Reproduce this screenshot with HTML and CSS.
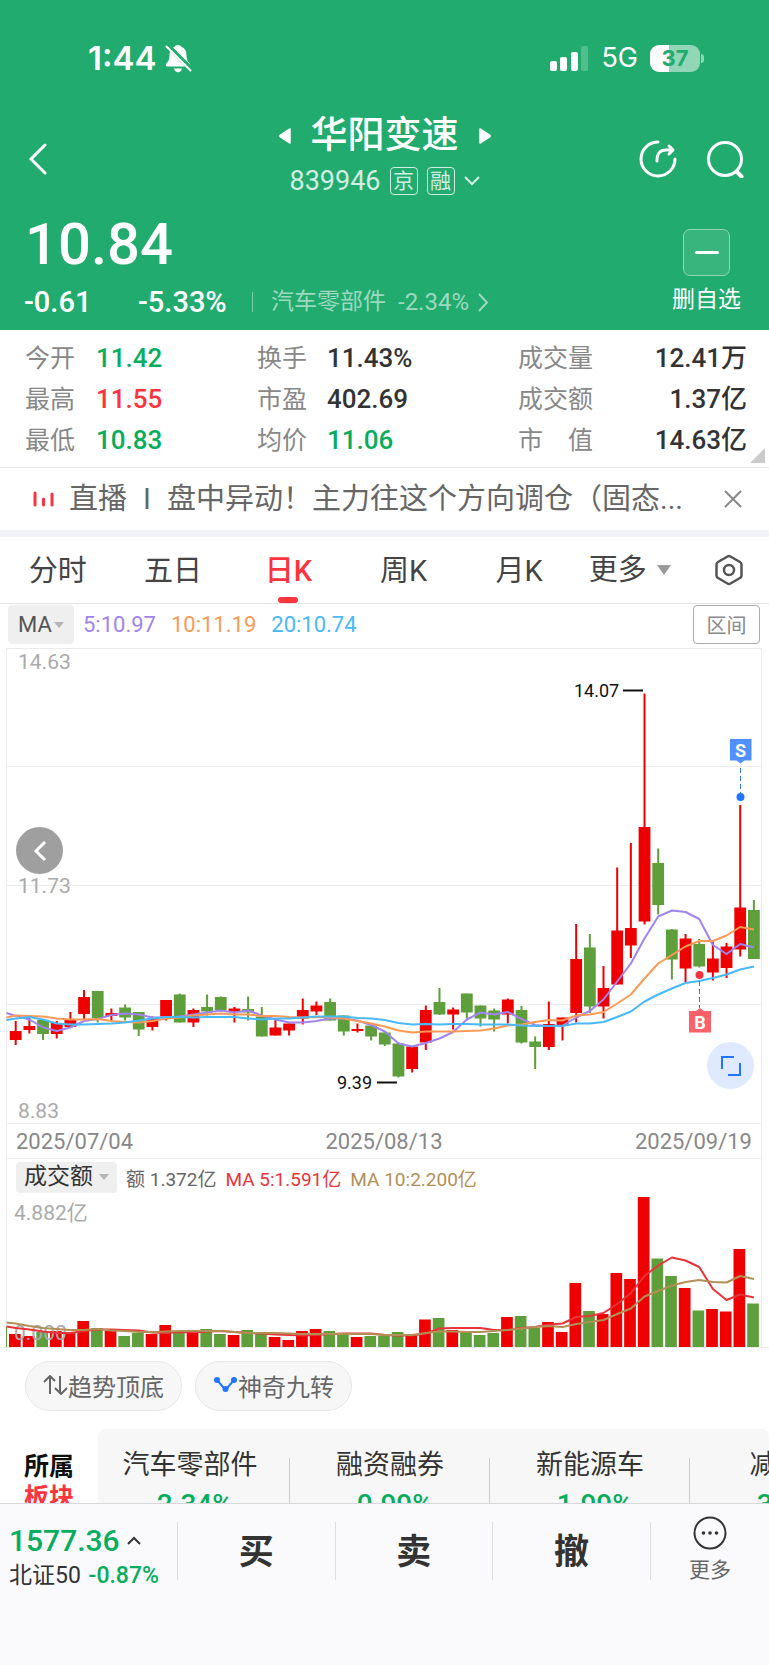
FILE: index.html
```html
<!DOCTYPE html>
<html lang="zh-CN">
<head>
    <meta charset="UTF-8">
    <meta name="viewport" content="width=device-width, initial-scale=1">
    <title>华阳变速 839946</title>
    <link rel="stylesheet" href="styles.css">
</head>
<body>
<div class="app">
    <div class="content">
        <header class="header">
            <div class="status">
                <span class="clock">1:44</span>
                <svg class="bell" width="27" height="29" viewBox="0 0 27 29">
                    <path d="M13 1c-1.800 0-3 .8-3.600 2C5.800 4.300 4.600 7.400 4.500 11c-.1 4.600-1.300 6.500-3.200 8.600C.4 21 .8 22.500 2.500 22.500h21c1.700 0 2.200-1.500 1.200-2.900-1.900-2.100-3.100-4-3.200-8.600-.1-3.600-1.300-6.700-4.900-8C16 1.800 14.800 1 13 1zM9 24.500c.5 2.300 2 3.700 4 3.700s3.500-1.400 4-3.700z" fill="#fff"/>
                    <path d="M2 1l25 25" stroke="#22ab6e" stroke-width="5"/>
                    <path d="M1.500 2.500L25.500 26.500" stroke="#fff" stroke-width="2" stroke-linecap="round"/>
                </svg>
                <svg class="signal" width="39" height="25" viewBox="0 0 39 25" fill="#fff">
                    <rect x="0" y="15" width="7" height="10" rx="2"/>
                    <rect x="10" y="11" width="7" height="14" rx="2"/>
                    <rect x="21" y="6" width="7" height="19" rx="2"/>
                    <rect x="31" y="0" width="7" height="25" rx="2" opacity=".22"/>
                </svg>
                <span class="network">5G</span>
                <span class="battery">37</span>
                <span class="battery-tip"></span>
            </div>
            <div class="nav">
                <button class="icon-btn back" aria-label="返回">
                    <svg width="20" height="32" viewBox="0 0 20 32"><path d="M17 2L3 16l14 14" fill="none" stroke="#fff" stroke-width="3" stroke-linecap="round"/></svg>
                </button>
                <div class="title">
                    <div class="name-row">
                        <svg width="12" height="18" viewBox="0 0 12 18"><path d="M11 2v14L1 9.500V8.500z" fill="#fff" stroke="#fff" stroke-width="1.500" stroke-linejoin="round"/></svg>
                        <h1>华阳变速</h1>
                        <svg width="12" height="18" viewBox="0 0 12 18"><path d="M1 2v14l10-6.500V8.500z" fill="#fff" stroke="#fff" stroke-width="1.500" stroke-linejoin="round"/></svg>
                    </div>
                    <div class="code-row">
                        <span>839946</span>
                        <span class="mark">京</span>
                        <span class="mark">融</span>
                        <svg width="16" height="10" viewBox="0 0 16 10"><path d="M1 1l7 7 7-7" fill="none" stroke="#d3eee2" stroke-width="2"/></svg>
                    </div>
                </div>
                <div class="nav-right">
                    <button class="icon-btn" aria-label="分享">
                        <svg width="38" height="38" viewBox="0 0 38 38" fill="none" stroke="#fff" stroke-width="3" stroke-linecap="round" stroke-linejoin="round"><path d="M19 2A17 17 0 1 0 36 19"/><path d="M18 21c0-8 3-11 9-11h6M30 6l4 4-4 4"/></svg>
                    </button>
                    <button class="icon-btn" aria-label="搜索">
                        <svg width="38" height="38" viewBox="0 0 38 38" fill="none" stroke="#fff" stroke-width="3" stroke-linecap="round"><circle cx="19" cy="19" r="16.500"/><path d="M30.500 31.500l5 5" stroke-width="4"/></svg>
                    </button>
                </div>
            </div>
            <div class="quote">
                <div class="quote-main">
                    <div class="price">10.84</div>
                    <div class="change">
                        <span class="diff">-0.61</span>
                        <span class="percent">-5.33%</span>
                        <a class="sector" href="#">汽车零部件 <span>-2.34%</span>
                            <svg width="11" height="19" viewBox="0 0 11 19"><path d="M1 1l8 8.500L1 18" fill="none" stroke="#9cd9bf" stroke-width="2"/></svg>
                        </a>
                    </div>
                </div>
                <div class="fav">
                    <button class="fav-btn" id="fav" aria-label="删自选"></button>
                    <label for="fav">删自选</label>
                </div>
            </div>
        </header>

        <section class="stats">
            <span class="label">今开</span><span class="down">11.42</span>
            <span class="label">换手</span><span>11.43%</span>
            <span class="label">成交量</span><span class="right">12.41万</span>
            <span class="label">最高</span><span class="up">11.55</span>
            <span class="label">市盈</span><span>402.69</span>
            <span class="label">成交额</span><span class="right">1.37亿</span>
            <span class="label">最低</span><span class="down">10.83</span>
            <span class="label">均价</span><span class="down">11.06</span>
            <span class="label">市　值</span><span class="right">14.63亿</span>
        </section>

        <div class="news">
            <svg width="21" height="16" viewBox="0 0 21 16" stroke="#fb3440" stroke-width="3" stroke-linecap="round"><path d="M2 2v12M10.500 8v6M19 3v11"/></svg>
            <a href="#"><span>直播</span><span class="bar">I</span><span>盘中异动！主力往这个方向调仓（固态...</span></a>
            <button class="icon-btn" aria-label="关闭">
                <svg width="18" height="18" viewBox="0 0 18 18"><path d="M1 1l16 16M17 1L1 17" stroke="#888" stroke-width="2"/></svg>
            </button>
        </div>

        <nav class="tabs">
            <button class="tab">分时</button>
            <button class="tab">五日</button>
            <button class="tab active">日K</button>
            <button class="tab">周K</button>
            <button class="tab">月K</button>
            <button class="tab more">更多<i class="caret"></i></button>
            <button class="icon-btn setting" aria-label="设置">
                <svg width="30" height="32" viewBox="0 0 30 32" fill="none" stroke="#555" stroke-width="2.500" stroke-linejoin="round"><path d="M13.500 2.500a3 3 0 0 1 3 0l9.500 5.500a3 3 0 0 1 1.500 2.500v11a3 3 0 0 1-1.500 2.500l-9.500 5.500a3 3 0 0 1-3 0L4 24a3 3 0 0 1-1.500-2.500v-11A3 3 0 0 1 4 8z"/><circle cx="15" cy="16" r="5"/></svg>
            </button>
        </nav>

        <div class="ma-row">
            <button class="chip">MA<i class="caret small"></i></button>
            <span class="ma5">5:10.97</span>
            <span class="ma10">10:11.19</span>
            <span class="ma20">20:10.74</span>
            <button class="range">区间</button>
        </div>

        <div class="chart">
            <svg id="kline" viewBox="0 0 769 476">
                <path class="grid" d="M6.500 .5h755v475h-755zM6.500 118.500h755M6.500 237.500h755M6.500 356.500h755"/>
                <text class="axis" x="18" y="21">14.63</text>
                <text class="axis" x="18" y="245">11.73</text>
                <text class="axis" x="18" y="470">8.83</text>
                <g id="candles"></g>
                <g id="maLines"></g>
                <text class="peak" x="574" y="49">14.07</text>
                <path d="M623 42.500h20M377 434.500h20" stroke="#111" stroke-width="2"/>
                <text class="peak" x="337" y="441">9.39</text>
                <g>
                    <path d="M740.500 120v26" stroke="#2b78ff" stroke-dasharray="5 3"/>
                    <circle cx="740.500" cy="149" r="4" fill="#2275ff"/>
                    <path d="M730 91h21.500v21.500h-7l-4 3-4-3H730z" fill="#5191ff"/>
                    <text class="flag" x="740.500" y="109">S</text>
                    <path d="M699.500 333v27" stroke="#fb3440" stroke-dasharray="5 3"/>
                    <circle cx="699.500" cy="327" r="4" fill="#fb3440"/>
                    <path d="M689 363h7l4-3 4 3h7v21.500h-22z" fill="#fb616a"/>
                    <text class="flag" x="700" y="381">B</text>
                </g>
            </svg>
            <button class="round prev" aria-label="上一段">
                <svg width="14" height="22" viewBox="0 0 14 22"><path d="M12 2l-9 9 9 9" fill="none" stroke="#fff" stroke-width="3"/></svg>
            </button>
            <button class="round expand" aria-label="全屏">
                <svg width="22" height="22" viewBox="0 0 22 22"><path d="M14 2H2v12M20 8v12H8" fill="none" stroke="#2275ff" stroke-width="2"/></svg>
            </button>
        </div>
        <div class="dates"><span>2025/07/04</span><span>2025/08/13</span><span>2025/09/19</span></div>

        <div class="volume">
            <div class="vol-row">
                <button class="chip">成交额<i class="caret small"></i></button>
                <span>额 1.372亿</span>
                <span class="vol5">MA 5:1.591亿</span>
                <span class="vol10">MA 10:2.200亿</span>
            </div>
            <svg id="volChart" viewBox="0 0 769 154">
                <path class="grid" d="M6.500 0v153M761.500 0v153M0 153.500h769"/>
                <text class="axis" x="14" y="26">4.882亿</text>
                <g id="bars"></g>
                <text class="axis" x="14" y="146">0.000</text>
                <g id="volLines"></g>
            </svg>
        </div>

        <div class="tools">
            <button class="pill"><svg width="25" height="20" viewBox="0 0 25 20" fill="none" stroke="#666" stroke-width="2"><path d="M1 7l6-6 5 5M7 1v18M17 1v17M12 13l6 6 6-6"/></svg>趋势顶底</button>
            <button class="pill"><svg width="25" height="20" viewBox="0 0 25 20" fill="#2275ff"><path d="M4 5l8.500 10L21 5" fill="none" stroke="#2275ff" stroke-width="2"/><circle cx="4" cy="5" r="3"/><circle cx="12.500" cy="14" r="3"/><circle cx="21" cy="5" r="3"/></svg>神奇九转</button>
        </div>

        <div class="boards">
            <div class="boards-title">所属<br><em>板块</em></div>
            <div class="boards-list">
                <a class="board" href="#">汽车零部件<b>-2.34%</b></a>
                <a class="board" href="#">融资融券<b>-0.99%</b></a>
                <a class="board" href="#">新能源车<b>-1.99%</b></a>
                <a class="board" href="#">减速器<b>-3.01%</b></a>
            </div>
        </div>
    </div>

    <footer class="trade">
        <a class="index" href="#">
            <span class="point">1577.36 <svg width="14" height="9" viewBox="0 0 14 9"><path d="M1 8l6-6 6 6" fill="none" stroke="#333" stroke-width="2"/></svg></span>
            <span class="index-name">北证50 <span class="down">-0.87%</span></span>
        </a>
        <button class="action">买</button>
        <button class="action">卖</button>
        <button class="action">撤</button>
        <button class="other">
            <svg width="34" height="34" viewBox="0 0 34 34"><circle cx="17" cy="17" r="15.500" fill="none" stroke="#333" stroke-width="2"/><g fill="#333"><circle cx="10.500" cy="17" r="1.800"/><circle cx="17" cy="17" r="1.800"/><circle cx="23.500" cy="17" r="1.800"/></g></svg>
            更多
        </button>
    </footer>
</div>
<script src="chart.js"></script>
</body>
</html>
```

FILE: styles.css
```css
* {
    box-sizing: border-box;
}

body {
    margin: 0;
    font-family: Roboto, "Noto Sans CJK SC", sans-serif;
    color: #333;
    background: #fff;
}

button {
    margin: 0;
    padding: 0;
    border: 0;
    background: none;
    font-family: inherit;
    color: inherit;
    cursor: pointer;
}

a {
    color: inherit;
    text-decoration: none;
}

svg {
    display: block;
    flex: none;
}

.app {
    display: flex;
    flex-direction: column;
    height: 100vh;
}

.content {
    flex: 1;
    min-height: 0;
    overflow: hidden;
}

.up {
    color: #fb3440;
}

.down {
    color: #07ad5e;
}

.icon-btn {
    display: flex;
    align-items: center;
}

/* header */
.header {
    padding: 36px 28px 10px;
    background: #22ab6e;
    color: #fff;
}

.status {
    display: flex;
    align-items: center;
    height: 44px;
    padding: 0 37px 0 60px;
}

.clock {
    font: 600 33px/44px Inter, sans-serif;
}

.bell {
    margin-left: 9px;
}

.signal {
    margin-left: auto;
}

.network {
    margin: 0 12px;
    font: 400 27px/44px Inter, sans-serif;
}

.battery {
    width: 50px;
    border-radius: 9px;
    background: linear-gradient(90deg, #fff 38%, #92d6b8 38%);
    color: #22ab6e;
    font: 700 22px/27px Inter, sans-serif;
    text-align: center;
}

.battery-tip {
    width: 3px;
    height: 9px;
    margin-left: 1px;
    border-radius: 0 3px 3px 0;
    background: #92d6b8;
}

.nav {
    display: grid;
    grid-template-columns: 1fr auto 1fr;
    align-items: center;
    margin-top: 33px;
}

.title {
    height: 92px;
}

.name-row {
    display: flex;
    align-items: center;
    justify-content: center;
    gap: 20px;
}

.name-row h1 {
    margin: 0;
    font-size: 37px;
    font-weight: 500;
    line-height: 46px;
}

.code-row {
    display: flex;
    align-items: center;
    justify-content: center;
    gap: 9px;
    margin-top: 7px;
    font-size: 27px;
    line-height: 30px;
    color: #d3eee2;
}

.mark {
    width: 28px;
    height: 28px;
    border: 1px solid #d3eee2;
    border-radius: 4px;
    font-size: 21px;
    line-height: 26px;
    text-align: center;
}

.nav-right {
    display: flex;
    justify-content: flex-end;
    gap: 29px;
    margin-right: -3px;
}

.quote {
    display: flex;
    justify-content: space-between;
    margin-top: 9px;
}

.price {
    margin-left: -3px;
    font-size: 58px;
    font-weight: 500;
    line-height: 60px;
}

.change {
    display: flex;
    align-items: center;
    height: 36px;
    margin: 10px 0 0 -4px;
    font-size: 29px;
    font-weight: 500;
}

.diff {
    width: 114px;
}

.percent {
    width: 114px;
}

.sector {
    display: flex;
    align-items: center;
    gap: 12px;
    padding-left: 18px;
    font-size: 23px;
    font-weight: 400;
    line-height: 20px;
    border-left: 1px solid #7bcda9;
    color: #9cd9bf;
}

.sector span {
    font-size: 24px;
}

.sector svg {
    margin-left: -3px;
}

.fav {
    display: flex;
    flex-direction: column;
    align-items: center;
    padding-top: 15px;
    font-size: 23px;
    line-height: 28px;
}

.fav-btn {
    display: flex;
    align-items: center;
    justify-content: center;
    width: 47px;
    height: 47px;
    margin-bottom: 10px;
    border: 1px solid #90d5b6;
    border-radius: 7px;
    background: #38b47d;
}

.fav-btn::before {
    content: "";
    width: 24px;
    height: 3px;
    border-radius: 2px;
    background: #fff;
}

/* stats */
.stats {
    position: relative;
    display: grid;
    grid-template-columns: 71px 161fr 70px 191fr 101px 128fr;
    padding: 8px 22px 6px 25px;
    border-bottom: 1px solid #e8e8e8;
    font-size: 26px;
    font-weight: 500;
    line-height: 41px;
}

.stats .label {
    font-size: 25px;
    font-weight: 400;
    color: #888;
}

.stats .right {
    text-align: right;
}

.stats::after {
    content: "";
    position: absolute;
    right: 4px;
    bottom: 4px;
    border-left: 15px solid transparent;
    border-bottom: 15px solid #ccc;
}

/* live news */
.news {
    display: flex;
    align-items: center;
    height: 69px;
    padding: 0 27px 0 33px;
    border-bottom: 7px solid #f2f4f8;
    color: #666;
}

.news a {
    display: flex;
    flex: 1;
    min-width: 0;
    margin-left: 15px;
    font-size: 29px;
    line-height: 40px;
    white-space: nowrap;
    overflow: hidden;
}

.news .bar {
    width: 40px;
    text-align: center;
}

/* tabs */
.tabs {
    display: flex;
    align-items: center;
    height: 67px;
    border-bottom: 1px solid #e2e2e2;
}

.tab {
    position: relative;
    flex: 0 0 15%;
    height: 66px;
    font-size: 29px;
    line-height: 68px;
    color: #444;
}

.tab.active {
    color: #fb3440;
    font-weight: 500;
}

.tab.active::after {
    content: "";
    position: absolute;
    left: 50%;
    bottom: 0;
    width: 20px;
    height: 6px;
    margin-left: -10px;
    border-radius: 3px;
    background: #fb3440;
}

.tab.more {
    display: flex;
    align-items: center;
    justify-content: center;
    flex: none;
    gap: 10px;
    margin-left: 12px;
}

.caret {
    border: 7px solid transparent;
    border-top: 10px solid #999;
    border-bottom: 0;
}

.caret.small {
    border-width: 6px 5px 0;
    border-top-color: #b5b5b5;
}

.setting {
    margin: 0 25px 0 auto;
}

/* average prices */
.ma-row {
    display: flex;
    align-items: center;
    gap: 15px;
    height: 44px;
    padding: 1px 9px 4px 8px;
    font-size: 22px;
}

.chip {
    display: flex;
    align-items: center;
    justify-content: center;
    border-radius: 4px;
    background: #efefef;
}

.ma-row .chip {
    width: 66px;
    height: 39px;
    margin-right: -6px;
    gap: 2px;
    font-size: 22px;
    color: #555;
}

.ma5 {
    color: #a084f0;
}

.ma10 {
    color: #fb9a55;
}

.ma20 {
    color: #48b9fb;
}

.range {
    width: 67px;
    height: 39px;
    margin-left: auto;
    border: 1px solid #aaa;
    border-radius: 4px;
    font-size: 20px;
    color: #888;
}

/* charts */
.chart {
    position: relative;
}

.chart > svg,
.volume > svg {
    width: 100%;
}

.grid {
    fill: none;
    stroke: #ececec;
}

.axis {
    font-size: 21px;
    fill: #aaa;
}

.peak {
    font-size: 18px;
    fill: #111;
}

.flag {
    font-size: 18px;
    font-weight: 700;
    text-anchor: middle;
    fill: #fff;
}

.rise {
    fill: #ee0000;
}

.fall {
    fill: #5f9f3b;
}

.line {
    fill: none;
    stroke-width: 2;
    stroke-linejoin: round;
}

.round {
    position: absolute;
    display: flex;
    align-items: center;
    justify-content: center;
    width: 47px;
    height: 47px;
    border-radius: 50%;
}

.prev {
    left: 16px;
    bottom: 250px;
    background: #9f9f9f;
}

.expand {
    right: 15px;
    bottom: 35px;
    background: #dfe9ff;
}

.dates {
    display: flex;
    justify-content: space-between;
    height: 35px;
    margin: 0 7px 0 6px;
    padding: 0 9px;
    border: 1px solid #ececec;
    border-top: 0;
    font-size: 22px;
    line-height: 36px;
    color: #888;
}

.vol-row {
    display: flex;
    align-items: center;
    gap: 9px;
    height: 35px;
    margin: 0 7px 0 6px;
    padding: 3px 9px 1px;
    border: solid #ececec;
    border-width: 0 1px;
    font-size: 19px;
    color: #666;
}

.vol-row .chip {
    width: 101px;
    height: 31px;
    gap: 6px;
    font-size: 23px;
    line-height: 28px;
    padding-bottom: 2px;
    color: #333;
}

.vol5 {
    color: #e83339;
}

.vol10 {
    color: #b28f57;
}

/* tools */
.tools {
    display: flex;
    gap: 13px;
    padding: 13px 25px 18px;
}

.pill {
    display: flex;
    align-items: center;
    justify-content: center;
    width: 157px;
    height: 50px;
    padding-bottom: 2px;
    border: 1px solid #e6e6e6;
    border-radius: 25px;
    background: #f7f7f7;
    font-size: 24px;
    color: #666;
}

.boards {
    display: flex;
    height: 110px;
}

.boards-title {
    flex: 0 0 98px;
    padding-top: 22px;
    font-size: 25px;
    font-weight: 700;
    line-height: 31px;
    text-align: center;
    color: #111;
}

.boards-title em {
    font-style: normal;
    color: #fb3440;
}

.boards-list {
    display: flex;
    flex: 1;
    min-width: 0;
    overflow: hidden;
    border-radius: 8px;
    background: #f7f7f7;
}

.board {
    position: relative;
    flex: 0 0 200px;
    padding-top: 16px;
    font-size: 27px;
    line-height: 40px;
    text-align: center;
}

.board:first-child {
    margin-left: -8px;
}

.board b {
    display: block;
    font-size: 28px;
    font-weight: 500;
    color: #07ad5e;
}

.board::after {
    content: "";
    position: absolute;
    top: 29px;
    right: 0;
    bottom: 0;
    border-right: 1px solid #ccc;
}

/* trade bar */
.trade {
    display: flex;
    flex: none;
    height: 162px;
    border-top: 1px solid #d8d8dc;
    background: #fafafd;
}

.index {
    display: flex;
    flex: 0 0 23%;
    flex-direction: column;
    padding: 18px 0 0 9px;
    white-space: nowrap;
}

.point {
    display: flex;
    align-items: center;
    gap: 7px;
    font-size: 30px;
    font-weight: 500;
    line-height: 37px;
    color: #07ad5e;
}

.index-name {
    font-size: 23px;
    line-height: 34px;
}

.index-name .down {
    margin-left: 2px;
    font-weight: 500;
}

.action {
    flex: 0 0 20.5%;
    height: 58px;
    margin-top: 18px;
    border-left: 1px solid #dedee2;
    padding-top: 4px;
    font-size: 35px;
    font-weight: 700;
    line-height: 54px;
}

.other {
    display: flex;
    flex: 1;
    flex-direction: column;
    align-items: center;
    height: 58px;
    margin-top: 18px;
    border-left: 1px solid #dedee2;
    font-size: 21px;
    line-height: 24px;
    color: #666;
}

.other svg {
    margin: -6px 0 8px;
}
```

FILE: chart.js
```js
// 每根K线: [涨跌, 实体上沿, 实体下沿, 最高, 最低]
var candles = [
    [1,383,392,373,397], [1,378,382,370,385.5], [0,372,386,372,392], [1,375,386,373,390.500], [1,372,379,364,379],
    [1,349,366,342,374], [0,343,370,343,374.500], [1,365,368,360.500,373], [0,359.500,369.500,356.500,372.500], [0,364,381.500,364,388],
    [1,370.500,379,368.500,382.500], [1,352,368.500,352,372.500], [0,346.500,374.500,345.500,374.500], [1,362,374.500,360.500,379], [0,359,363.500,346.500,367.500],
    [0,349,362,348.500,364], [1,360.500,363.500,359,374.500], [0,361,364.500,348.500,372.500], [0,368.500,388.500,359,388.500], [1,379.500,387.500,372,387.500],
    [1,375.500,382.500,375.500,387.500], [1,362,370.500,350.500,376.500], [1,357.500,363.500,353.500,367], [0,354,372.500,350.500,372.500], [0,367.500,383.500,367.500,387.500],
    [1,381,383,375.500,384.500], [0,377.500,388.500,377.500,392.500], [0,384.500,396.500,384.500,398], [0,395.500,428.500,394.500,429.500], [1,398.500,421,398,424.500],
    [1,362,394.500,357.500,402], [0,354,366.500,340,367], [1,361.500,366.500,359.500,381.500], [0,345.500,364.500,345.500,370.500], [0,357.500,370.500,357.500,378.500],
    [0,362.500,371.500,360.500,383.500], [1,351.500,366.500,350.500,375.500], [0,362,394.500,358,395.500], [0,393.500,399,388.500,421], [1,376,399,353.500,402],
    [1,369.500,377.500,369.500,392.500], [1,311,365,276,374.500], [0,299.500,358.500,286,365], [1,340,358.500,318,370.500], [1,282.500,336.500,219.500,336.500],
    [1,280,297.500,195,310], [1,179,273.500,45.500,276.500], [0,215,257,200.500,266.500], [0,281.500,311.500,281,331.500], [1,290.500,320.500,286,334],
    [0,296,318.500,291,319.500], [1,310.500,324.500,293,332.500], [1,298.500,320,295,330], [1,259.500,301.500,157,308.500], [0,262,311,252,311]
];

// 均线, 第一个点在左边框上
var ma5 = [365,368,371.500,379.500,383,379.500,373,371,367,365.500,366.500,369.500,369.500,368.500,366.500,364.500,362.500,364.500,362.500,367.500,371.500,374.500,374.500,373,370.500,370.500,372.500,377,383.500,395.500,398.500,395,390.500,384,371.500,364.500,366.500,364,371,377,378,377.500,369.500,363,351.500,333.500,315.500,290.500,268.500,262.500,264,271,297,306,296,299.500];
var ma10 = [369.500,367.500,368,368.500,370.500,371.500,371.500,371,373,374,374.500,373,370.500,369.500,367.500,366.500,365.500,366.500,366.500,368,368,369,369.500,369,369.500,370.500,373,375.500,378.500,382.500,384.500,383.500,383.500,383.500,383,382.500,380.500,377.500,376.500,374,372,372.500,367.500,366.500,364,355.500,346.500,330.500,315.500,307,298.500,293,293,287.500,279,281.500];
var ma20 = [372,370.500,369,371.500,375.500,376.500,376.500,376,375.500,374.500,372.500,370.500,369,369,369.500,369,369,369,370.500,371.500,370.500,370.500,369.500,368.500,368.500,368.500,370,370.500,372,375,376.500,376,376.500,376,376,376.500,376.500,376.500,377.500,378,378,378,375.500,375.500,374,369,363.500,353.500,346.500,340.500,335,333,330,326.500,321.500,318.500];

// 成交额柱高和均线, 从底线往上量
var volumes = [13,11,15,16,15,26,19,16,11,14,13,22,14,15,18,13,12,17,14,10,7,16,18,16,13,10,11,11,15,11,27.500,29,17,15,12,14,30,31,19,25,15,64,36,33,74,68,150,88.500,71,59,36.500,38,35.500,98,43.500];
var vol5 = [20.500,19,17.500,15.500,14,14,16,17.500,17.500,17,16.500,14.500,14,15,14.500,15.500,16,15,14,13.500,12.500,12,11.500,12,13,13.500,13.500,13.500,12,11.500,11.500,13.500,18.500,19,19,19,17,17,19,20,22.500,23.500,30,31,34,43,54,71,81.500,89.500,86.500,80,58,47,52.500,49.500];
var vol10 = [24.500,23.500,21,19,18,17,17,18,16.500,16,15,15,15.500,16,16,16,16,15,14,14,14,13.500,13,13,13,13,13,13,12,12,12,14,15.500,15.500,15,15,16,17,18.500,20,21,20,23,25,27,33,38.500,50.500,56,61.500,65,67,65,64.500,71,68];

var step = 13.67;

function rect(x, y, w, h, up) {
    return '<rect class="' + (up ? 'rise' : 'fall') + '" x="' + x + '" y="' + y + '" width="' + w + '" height="' + h + '"/>';
}

function line(data, color, base) {
    var pts = data.map(function (v, i) {
        var x = i == 0 ? 6.5 : 15.7 + (i - 1) * step;
        return x.toFixed(1) + ',' + (base ? base - v : v);
    });
    return '<polyline class="line" stroke="' + color + '" points="' + pts.join(' ') + '"/>';
}

document.getElementById('candles').innerHTML = candles.map(function (c, i) {
    var x = 15.7 + i * step;
    return rect(x - 1, c[3], 2, c[4] - c[3], c[0]) + rect(x - 5.9, c[1], 11.8, c[2] - c[1], c[0]);
}).join('');

document.getElementById('maLines').innerHTML =
    line(ma5, '#a084f0') + line(ma10, '#fb9a55') + line(ma20, '#48b9fb');

document.getElementById('bars').innerHTML = rect(6, 133, 1, 20, 0) + volumes.map(function (v, i) {
    return rect(9 + i * step, 153 - v, 11.7, v, candles[i][0]);
}).join('');

document.getElementById('volLines').innerHTML =
    line(vol5, '#e83339', 153) + line(vol10, '#b28f57', 153);
```
